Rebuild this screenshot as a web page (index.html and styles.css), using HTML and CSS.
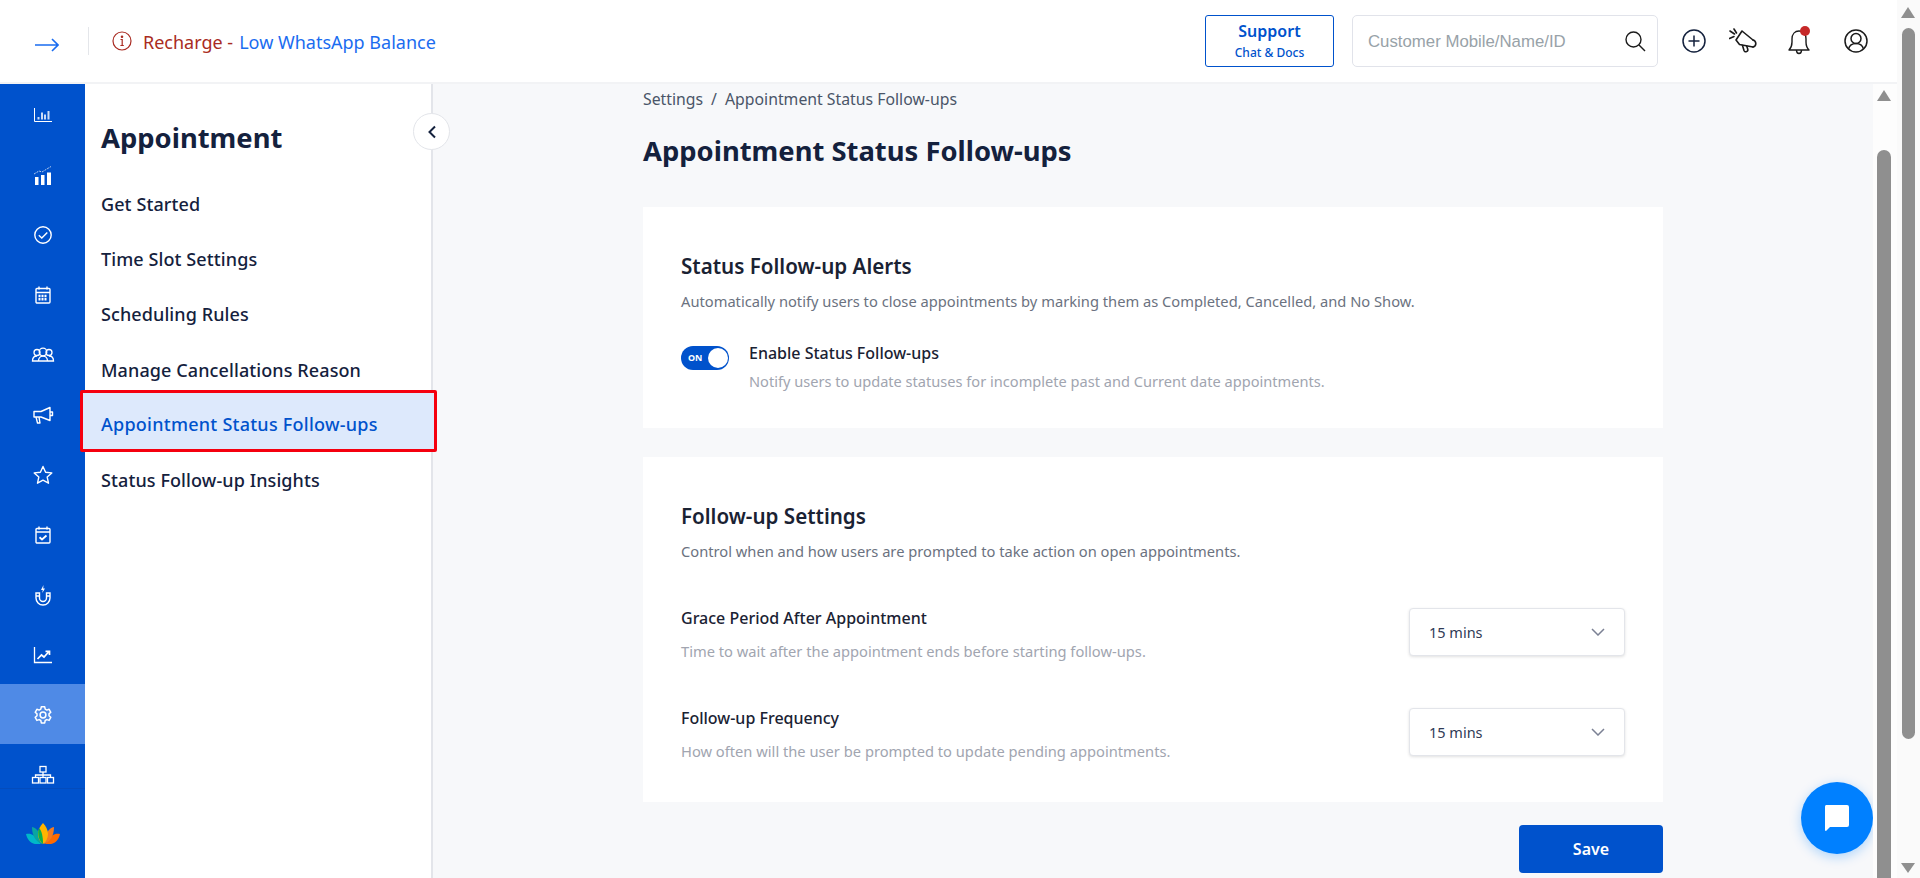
FILE: index.html
```html
<!DOCTYPE html>
<html lang="en">
<head>
  <meta charset="UTF-8">
  <title>Appointment Status Follow-ups</title>
  <link rel="stylesheet" href="styles.css">
</head>
<body>
<div class="app">
  <div class="page">
    <header class="topbar">
      <div class="topbar-left">
        <svg class="expand-icon" width="24" height="14" viewBox="0 0 24 14" fill="none" stroke="#1a6cf0" stroke-width="1.6"><path d="M0 7h22.500M17 1l6 6-6 6"/></svg>
        <span class="topbar-divider"></span>
        <svg class="alert-icon" width="20" height="20" viewBox="0 0 20 20" fill="none" stroke="#a92b22" stroke-width="1.2"><circle cx="10" cy="10" r="9"/><path d="M8.500 8.500H10.200V14.500M8.400 14.500h3.400"/><circle cx="10" cy="5.800" r=".7" fill="#a92b22"/></svg>
        <span class="recharge">Recharge -</span>
        <span class="low-balance">Low WhatsApp Balance</span>
      </div>
      <div class="topbar-right">
        <a class="support-btn"><span class="support-title">Support</span><span class="support-sub">Chat &amp; Docs</span></a>
        <div class="search-box">
          <span class="search-text">Customer Mobile/Name/ID</span>
          <svg width="22" height="22" viewBox="0 0 22 22" fill="none" stroke="#1b1b1b" stroke-width="1.4"><circle cx="9.500" cy="9.500" r="7.500"/><path d="M15 15l6 6"/></svg>
        </div>
        <svg class="top-icon plus" width="24" height="24" viewBox="0 0 24 24" fill="none" stroke="#14213d" stroke-width="1.5"><circle cx="12" cy="12" r="11"/><path d="M12 6.500v11M6.500 12h11"/></svg>
        <svg class="top-icon promo" width="30" height="30" viewBox="0 0 30 30" fill="none" stroke="#1b1b1b" stroke-width="1.6" stroke-linejoin="round" stroke-linecap="round"><path d="M13 5L7 14l3.500 4.500L24 21M13 5l11 9"/><path d="M24 14c3.500 1 4 6 0 7"/><path d="M13.500 19.500l1.500 5c1 2.500 4.500 1 3.700-1.500l-1-3"/><path d="M1 5l4.500 3M.5 12.500l4.500-2M5 3l2.500 4"/></svg>
        <span class="bell">
          <svg width="26" height="32" viewBox="0 0 26 32" fill="none" stroke="#1b1b1b" stroke-width="1.4" stroke-linejoin="round"><path d="M3 25c2-2 3-4 3-8v-3c0-5 3-8 7-8s7 3 7 8v3c0 4 1 6 3 8z"/><path d="M10.500 25c0 2.500 1.500 3.500 2.500 3.500s2.500-1 2.500-3.500"/></svg>
          <i class="bell-dot"></i>
        </span>
        <svg class="top-icon" width="24" height="24" viewBox="0 0 24 24" fill="none" stroke="#1b1b1b" stroke-width="1.5"><circle cx="12" cy="12" r="11"/><circle cx="12" cy="9.500" r="5"/><path d="M4.500 20c1-4 3.500-5.500 7.500-5.500s6.500 1.500 7.500 5.500"/></svg>
      </div>
    </header>

    <div class="body-row">
      <nav class="rail">
        <div class="rail-scroll">
          <div class="rail-item"><svg width="18" height="14" viewBox="0 0 18 14" fill="none" stroke="#fff" stroke-width="1"><path d="M.5 0v13.500H18"/><path d="M4.500 11.500V9M8 11.500V4.500M11 11.500V6.500M14.500 11.500V3" stroke-width="2" stroke-opacity=".8"/></svg></div>
          <div class="rail-item"><svg width="18" height="19" viewBox="0 0 18 19"><path fill="none" stroke="#fff" stroke-opacity=".7" stroke-dasharray="2 1" d="M0 8l5-3 3 1 9-5.500"/><path fill="#fff" d="M1 11h3.500v8H1zM7 9h3.500v10H7zM13 6.500h4V19h-4z"/></svg></div>
          <div class="rail-item"><svg width="20" height="20" viewBox="0 0 20 20" fill="none" stroke="#fff" stroke-width="1.400"><circle cx="10" cy="10" r="8.200"/><path d="M5.800 10.300l3 2.700 5.500-5.500"/></svg></div>
          <div class="rail-item"><svg width="20" height="20" viewBox="0 0 20 20" fill="none" stroke="#fff" stroke-width="1.400"><rect x="3" y="3.500" width="14" height="14.500" rx="1"/><path d="M3 7.500h14M6 1.500v3M14 1.500v3"/><path stroke-width="2.500" stroke-dasharray="2 1" d="M5.500 11h9M5.500 14.300h9"/></svg></div>
          <div class="rail-item"><svg width="24" height="20" viewBox="0 0 24 20" fill="none" stroke="#fff" stroke-width="1.300"><circle cx="12" cy="7" r="3.800"/><circle cx="6" cy="7.500" r="3"/><circle cx="18" cy="7.500" r="3"/><path d="M7.500 16c0-3 2-5 4.500-5s4.500 2 4.500 5z"/><path d="M7 16H1.500c0-3 1.500-5 4.500-5M17 16h5.500c0-3-1.500-5-4.500-5"/></svg></div>
          <div class="rail-item"><svg width="22" height="20" viewBox="0 0 22 20" fill="none" stroke="#fff" stroke-width="1.400" stroke-linejoin="round"><path d="M2 6.500h7L18 2.500v13L9 12H2z"/><path d="M18 7h2.500v3.500H18M4 12l1.500 6H8l-1-6"/></svg></div>
          <div class="rail-item"><svg width="20" height="20" viewBox="0 0 20 20" fill="none" stroke="#fff" stroke-width="1.400" stroke-linejoin="round"><path d="M10 1.500l2.600 5.700 6.200.7-4.600 4.200 1.300 6.100L10 15.200l-5.500 3 1.300-6.100L1.200 7.900l6.200-.7z"/></svg></div>
          <div class="rail-item"><svg width="20" height="20" viewBox="0 0 20 20" fill="none" stroke="#fff" stroke-width="1.400"><rect x="3" y="3.500" width="14" height="14.500" rx="1"/><path d="M3 7h14M6 1.500v3M14 1.500v3"/><path stroke-width="1.800" d="M6.500 12.300l2.500 2.200 4.500-4"/></svg></div>
          <div class="rail-item"><svg width="20" height="22" viewBox="0 0 20 22" fill="none" stroke="#fff" stroke-width="1.400"><path d="M3 9v5a7 7 0 0 0 14 0V9h-3.500v5a3.500 3.500 0 0 1-7 0V9z"/><path d="M3 12h3.500M13.500 12H17"/><path fill="#fff" stroke="none" d="M10.500 1L8 6h1.800l-.6 3L12 4.500h-1.800z"/></svg></div>
          <div class="rail-item"><svg width="20" height="20" viewBox="0 0 20 20" fill="none" stroke="#fff" stroke-width="1.300"><path d="M1.500 2v15.500H19"/><path stroke-width="1.700" d="M4.500 14l4-4 2.500 2 5-5.500M12.500 6.300h4v3.700"/></svg></div>
          <div class="rail-item active"><svg width="20" height="20" viewBox="0 0 20 20" fill="none" stroke="#fff" stroke-width="1.500" stroke-linejoin="round"><path d="M8.300 1.800h3.400l.5 2.400 1.600.9 2.300-.8 1.700 3-1.800 1.600v1.900l1.800 1.600-1.700 3-2.300-.8-1.600.9-.5 2.400H8.300l-.5-2.400-1.600-.9-2.300.8-1.700-3 1.800-1.600V8.900L2.200 7.300l1.700-3 2.300.8 1.600-.9z"/><circle cx="10" cy="10" r="2.900"/></svg></div>
          <div class="rail-item"><svg width="24" height="20" viewBox="0 0 24 20" fill="none" stroke="#fff" stroke-width="1.300"><rect x="9" y="1.500" width="6" height="5.500"/><rect x="1.500" y="12.500" width="6" height="5.500"/><rect x="9" y="12.500" width="6" height="5.500"/><rect x="16.500" y="12.500" width="6" height="5.500"/><path d="M12 7v5.500M4.500 12.500V10h15v2.500"/></svg></div>
        </div>
        <div class="rail-logo">
          <svg width="34" height="21" viewBox="0 0 34 21"><path fill="#00b8c8" d="M0 11c5-1 9 1 12 7l3 3H9c-5-1-8-5-9-10z"/><path fill="#ff6a00" d="M34 11c-5-1-9 1-12 7l-3 3h6c5-1 8-5 9-10z"/><path fill="#0aa5a0" d="M6 4c5 1 9 6 10 17-6-2-10-8-10-17z"/><path fill="#f47b20" d="M28 4c-5 1-9 6-10 17 6-2 10-8 10-17z"/><path fill="#ffb400" d="M17 0c3 3 5 7 5 11s-2 8-5 10c-3-2-5-6-5-10s2-8 5-11z"/><path fill="#0bb04a" d="M13 5c3 3 4 9 4 16-4-3-6-10-4-16z"/></svg>
        </div>
      </nav>

      <aside class="side-panel">
        <h2 class="panel-title">Appointment</h2>
        <span class="collapse-btn"><svg width="10" height="14" viewBox="0 0 10 14" fill="none" stroke="#14213d" stroke-width="2"><path d="M8 1.500L2.500 7 8 12.500"/></svg></span>
        <ul class="panel-menu">
          <li>Get Started</li>
          <li>Time Slot Settings</li>
          <li>Scheduling Rules</li>
          <li>Manage Cancellations Reason</li>
          <li class="current">Appointment Status Follow-ups</li>
          <li>Status Follow-up Insights</li>
        </ul>
      </aside>

      <main class="content">
        <div class="content-inner">
          <div class="crumbs">Settings<span class="crumb-sep">/</span>Appointment Status Follow-ups</div>
          <h1 class="page-title">Appointment Status Follow-ups</h1>

          <section class="card card-alerts">
            <h3 class="card-title">Status Follow-up Alerts</h3>
            <p class="card-desc">Automatically notify users to close appointments by marking them as Completed, Cancelled, and No Show.</p>
            <div class="toggle-row">
              <span class="toggle"><span class="toggle-on">ON</span><i class="toggle-knob"></i></span>
              <div>
                <div class="field-label">Enable Status Follow-ups</div>
                <div class="field-hint">Notify users to update statuses for incomplete past and Current date appointments.</div>
              </div>
            </div>
          </section>

          <section class="card card-settings">
            <h3 class="card-title">Follow-up Settings</h3>
            <p class="card-desc">Control when and how users are prompted to take action on open appointments.</p>
            <div class="setting-row first">
              <div>
                <div class="field-label">Grace Period After Appointment</div>
                <div class="field-hint">Time to wait after the appointment ends before starting follow-ups.</div>
              </div>
              <div class="select-box">15 mins<svg width="14" height="8" viewBox="0 0 14 8" fill="none" stroke="#7b8194" stroke-width="1.500"><path d="M1 1l6 6 6-6"/></svg></div>
            </div>
            <div class="setting-row">
              <div>
                <div class="field-label">Follow-up Frequency</div>
                <div class="field-hint">How often will the user be prompted to update pending appointments.</div>
              </div>
              <div class="select-box">15 mins<svg width="14" height="8" viewBox="0 0 14 8" fill="none" stroke="#7b8194" stroke-width="1.500"><path d="M1 1l6 6 6-6"/></svg></div>
            </div>
          </section>

          <div class="save-row"><button class="save-btn">Save</button></div>
        </div>
        <a class="chat-fab"><svg width="26" height="26" viewBox="0 0 26 26"><path fill="#fff" d="M2 0h21a2 2 0 0 1 2 2v18a2 2 0 0 1-2 2H6l-4 4a1 1 0 0 1-1-1V2a2 2 0 0 1 1-2z"/></svg></a>
        <div class="scrollbar inner-bar"><i class="arrow-up"></i><i class="thumb"></i></div>
      </main>
    </div>
  </div>
  <div class="scrollbar outer-bar"><i class="arrow-up"></i><i class="thumb"></i><i class="arrow-down"></i></div>
</div>
</body>
</html>
```

FILE: styles.css
```css
* {
  box-sizing: border-box;
}
html, body {
  margin: 0;
  height: 100%;
  overflow: hidden;
}
body {
  font-family: 'Noto Sans', sans-serif;
  color: #14213d;
  background: #fff;
}
.app {
  display: flex;
  height: 878px;
}
.page {
  width: 1897px;
  display: flex;
  flex-direction: column;
}

/* top bar */
.topbar {
  height: 84px;
  background: #fff;
  border-bottom: 2px solid #f2f3f5;
  display: flex;
  justify-content: space-between;
  align-items: center;
  padding: 0 29px 0 35px;
}
.topbar-left {
  display: flex;
  align-items: center;
}
.expand-icon {
  margin-top: 8px;
}
.topbar-divider {
  width: 1px;
  height: 28px;
  background: #e4e6ea;
  margin: 0 23px 0 29px;
}
.alert-icon {
  margin-right: 11px;
}
.recharge {
  margin-top: 2px;
  font-size: 18px;
  color: #a92b22;
  margin-right: 6px;
}
.low-balance {
  margin-top: 2px;
  font-size: 18px;
  color: #1a6cf0;
}
.topbar-right {
  display: flex;
  align-items: center;
}
.support-btn {
  width: 129px;
  height: 52px;
  border: 1px solid #0052cc;
  border-radius: 3px;
  display: flex;
  flex-direction: column;
  align-items: center;
  justify-content: center;
  color: #0052cc;
  margin-right: 18px;
}
.support-title {
  font-size: 16px;
  font-weight: 600;
  line-height: 23px;
}
.support-sub {
  font-size: 12px;
  font-weight: 500;
  line-height: 19px;
}
.search-box {
  width: 306px;
  height: 52px;
  border: 1px solid #e1e3ea;
  border-radius: 5px;
  display: flex;
  align-items: center;
  justify-content: space-between;
  padding: 0 11px 0 15px;
  margin-right: 24px;
}
.search-text {
  margin-top: 2px;
  font-family: 'Liberation Sans', sans-serif;
  font-size: 16.800px;
  color: #98a2a8;
}
.top-icon.plus {
  margin-right: 23px;
}
.top-icon.promo {
  margin-right: 27px;
}
.bell {
  position: relative;
  display: block;
  width: 26px;
  height: 32px;
  margin-right: 32px;
}
.bell-dot {
  position: absolute;
  top: 1px;
  right: 2px;
  width: 10px;
  height: 10px;
  border-radius: 50%;
  background: #c62828;
}

/* left rail */
.body-row {
  flex: 1;
  display: flex;
  min-height: 0;
}
.rail {
  width: 85px;
  background: #0052cc;
  display: flex;
  flex-direction: column;
}
.rail-scroll {
  height: 705px;
  overflow: hidden;
  border-bottom: 1px solid #044cbc;
}
.rail-item {
  height: 60px;
  padding-top: 2px;
  display: flex;
  align-items: center;
  justify-content: center;
}
.rail-item.active {
  background: #4f8ae6;
}
.rail-logo {
  flex: 1;
  display: flex;
  align-items: center;
  justify-content: center;
}

/* second panel */
.side-panel {
  position: relative;
  z-index: 2;
  width: 348px;
  background: #fff;
  border-right: 2px solid #e3e5ea;
  padding-top: 36px;
}
.panel-title {
  margin: 0 0 0 16px;
  font-size: 27.400px;
  line-height: 36px;
  font-weight: 700;
  color: #14213d;
}
.collapse-btn {
  position: absolute;
  top: 29px;
  right: -19px;
  width: 37px;
  height: 37px;
  border-radius: 50%;
  background: #fff;
  border: 1px solid #e3e5ea;
  display: flex;
  align-items: center;
  justify-content: center;
}
.panel-menu {
  list-style: none;
  margin: 21px 0 0;
  padding: 0;
}
.panel-menu li {
  height: 55.200px;
  line-height: 55px;
  padding-left: 16px;
  font-size: 18px;
  font-weight: 500;
  letter-spacing: .1px;
  color: #14213d;
}
.panel-menu li.current {
  height: 62px;
  margin: -7.800px -6px 1px -5px;
  padding: 3px 0 0 18px;
  background: #dde9fc;
  border: 3px solid #f5000f;
  border-radius: 2px;
  line-height: 56px;
  letter-spacing: .25px;
  color: #0052cc;
}

/* settings content */
.content {
  position: relative;
  flex: 1;
  background: #f7f8fa;
  display: flex;
  min-width: 0;
  overflow: hidden;
}
.content-inner {
  width: 1020px;
  margin-left: 210px;
  padding-top: 3px;
}
.crumbs {
  font-size: 15.800px;
  line-height: 24px;
  color: #4a5568;
}
.crumb-sep {
  margin: 0 8px;
}
.page-title {
  margin: 20px 0 0;
  font-size: 27.400px;
  line-height: 40px;
  font-weight: 700;
  color: #14213d;
}
.card {
  background: #fff;
  padding: 45px 38px 0;
}
.card-alerts {
  height: 221px;
  margin-top: 36px;
}
.card-settings {
  height: 345px;
  margin-top: 29px;
}
.card-title {
  margin: 0;
  font-size: 20.600px;
  line-height: 28px;
  font-weight: 600;
  color: #1a2233;
}
.card-desc {
  margin: 10px 0 0;
  font-size: 14.700px;
  line-height: 22px;
  color: #6b7280;
}
.toggle-row {
  display: flex;
  margin-top: 30px;
}
.toggle {
  position: relative;
  width: 48px;
  height: 24px;
  margin-top: 4px;
  margin-right: 20px;
  flex: none;
  border-radius: 12px;
  background: #0052cc;
}
.toggle-on {
  position: absolute;
  left: 7px;
  top: 5px;
  font-size: 9px;
  line-height: 14px;
  font-weight: 700;
  color: #fff;
}
.toggle-knob {
  position: absolute;
  right: 1px;
  top: 2px;
  width: 20px;
  height: 20px;
  border-radius: 50%;
  background: #fff;
}
.field-label {
  font-size: 16px;
  line-height: 22px;
  font-weight: 500;
  color: #1a2233;
}
.field-hint {
  margin-top: 7px;
  font-size: 14.600px;
  line-height: 20px;
  color: #a1a5b0;
}
.setting-row {
  display: flex;
  justify-content: space-between;
  align-items: flex-start;
  height: 70px;
  margin-top: 30px;
}
.setting-row.first {
  margin-top: 45px;
}
.setting-row .field-hint {
  margin-top: 12px;
  font-size: 14.700px;
}
.select-box {
  width: 216px;
  height: 48px;
  margin-top: 1px;
  padding: 0 19px;
  background: #fff;
  border: 1px solid #e3e5ea;
  border-radius: 4px;
  box-shadow: 0 1px 3px rgba(0, 0, 0, .12);
  display: flex;
  align-items: center;
  justify-content: space-between;
  font-size: 14.500px;
  color: #2f3a55;
}
.save-row {
  display: flex;
  justify-content: flex-end;
  margin-top: 23px;
}
.save-btn {
  width: 144px;
  height: 48px;
  border: none;
  border-radius: 4px;
  background: #0052cc;
  color: #fff;
  font-family: inherit;
  font-size: 16px;
  font-weight: 600;
}

/* overlay bits */
.chat-fab {
  position: absolute;
  right: 24px;
  top: 698px;
  width: 72px;
  height: 72px;
  border-radius: 50%;
  background: #0080ff;
  box-shadow: 0 3px 12px rgba(0, 128, 255, .3);
  display: flex;
  align-items: center;
  justify-content: center;
}
.scrollbar {
  position: relative;
  flex: none;
  display: flex;
  flex-direction: column;
}
.inner-bar {
  position: absolute;
  right: 0;
  top: 0;
  bottom: 0;
  width: 24px;
  background: #fdfdfd;
  padding-left: 4px;
}
.outer-bar {
  width: 23px;
  background: #fafafa;
}
.thumb {
  display: block;
  width: 14px;
  background: #8f8f8f;
  border-radius: 7px;
}
.inner-bar .thumb {
  margin-top: 49px;
  flex: 1;
  border-radius: 7px 7px 0 0;
}
.outer-bar .thumb {
  margin: 10px 0 0 5px;
  height: 711px;
  width: 13px;
}
.arrow-up, .arrow-down {
  display: block;
  width: 0;
  height: 0;
  border-left: 7px solid transparent;
  border-right: 7px solid transparent;
}
.arrow-up {
  border-bottom: 11px solid #8f8f8f;
  margin-top: 6px;
}
.outer-bar .arrow-up {
  margin: 7px 0 0 4px;
}
.arrow-down {
  border-top: 10px solid #8f8f8f;
  margin: 124px 0 0 4px;
}
```
